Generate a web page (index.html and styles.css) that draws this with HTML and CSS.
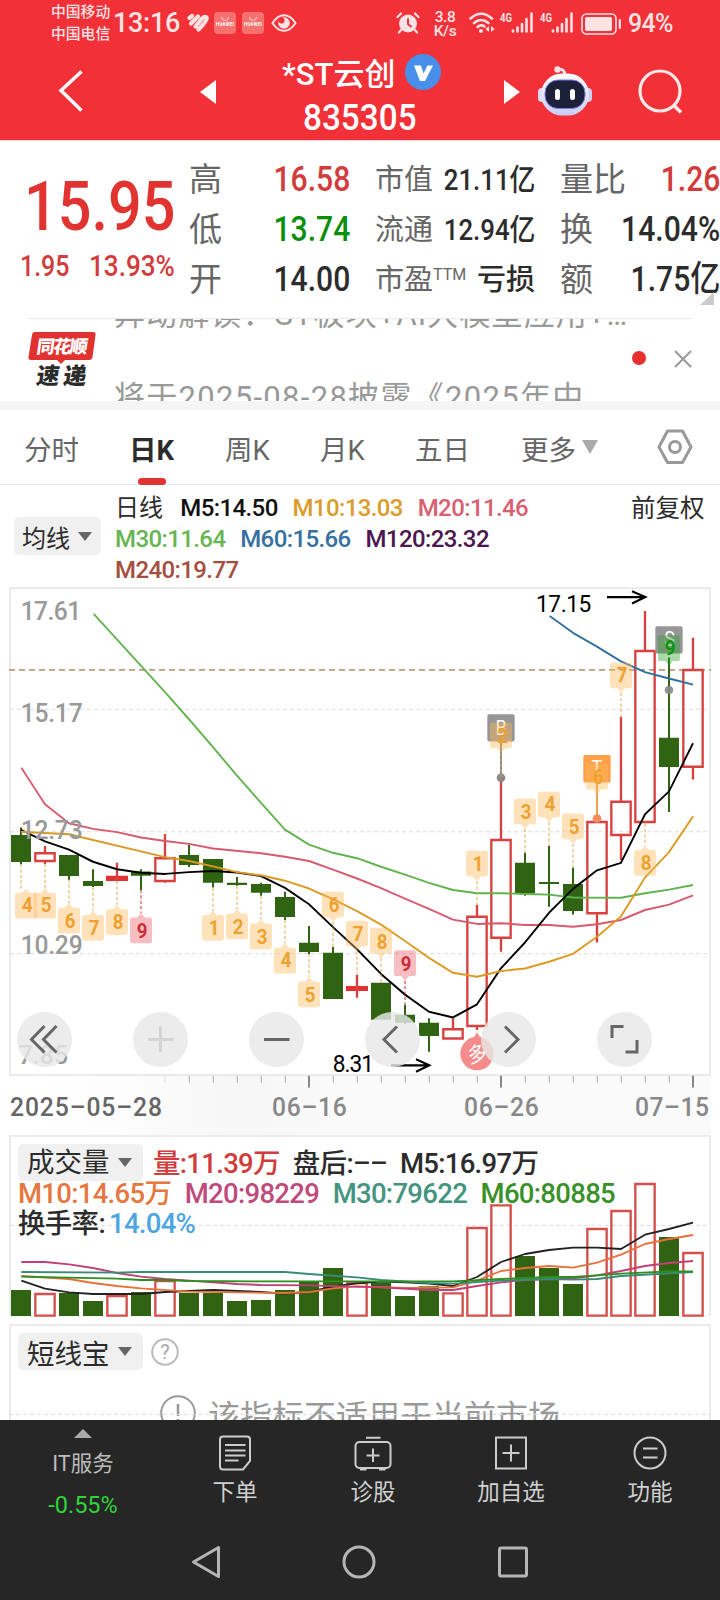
FILE: index.html
```html
<!DOCTYPE html>
<html lang="zh-CN">
<head>
<meta charset="utf-8">
<title>*ST云创 835305</title>
<link rel="stylesheet" href="styles.css">
</head>
<body>
<div class="app">
  <header class="top">
    <div class="status">
      <div class="carrier"><span>中国移动</span><span>中国电信</span></div>
      <span class="clock">13:16</span>
      <svg class="ic-health" width="22" height="20" viewBox="0 0 22 20"><g fill="none" stroke="#ffe2e3" stroke-width="4.200" stroke-linecap="round"><path d="M2.500 5L5 3"/><path d="M4 10.500L11 3.500"/><path d="M8.500 13.500L15.500 5Q18.500 2.500 19.800 5Q20 8 11.500 16.500"/></g></svg>
      <svg class="ic-hw" width="22" height="22" viewBox="0 0 22 22"><rect width="22" height="22" rx="4" fill="#f7716f"/><path d="M7.500 5a3.500 3.500 0 0 0 7 0" fill="none" stroke="#ffd5d5"/><text x="2" y="14" font-size="4.500" font-weight="700" fill="#fff" textLength="18">HUAWEI</text></svg>
      <svg class="ic-hw2" width="22" height="22" viewBox="0 0 22 22"><rect width="22" height="22" rx="4" fill="#f7716f"/><path d="M7.500 5a3.500 3.500 0 0 0 7 0" fill="none" stroke="#ffd5d5"/><text x="2" y="14" font-size="4.500" font-weight="700" fill="#fff" textLength="18">HUAWEI</text></svg>
      <svg class="ic-eye" width="26" height="18" viewBox="0 0 26 18"><path d="M1.500 9Q6.500 1.200 13 1.200T24.500 9Q19.500 16.800 13 16.800T1.500 9z" fill="none" stroke="#ffe2e3" stroke-width="2"/><circle cx="13" cy="9" r="5.800" fill="#ffe2e3"/><circle cx="10.500" cy="6.500" r="3" fill="#f23038"/></svg>
      <span class="spacer"></span>
      <svg class="ic-alarm" width="24" height="22" viewBox="0 0 24 22"><circle cx="12" cy="11.500" r="9" fill="#ffe2e3"/><path d="M1.500 5L5 1.500M22.500 5L19 1.500M5 18l-2 2.500M19 18l2 2.500" stroke="#ffe2e3" stroke-width="2.200" stroke-linecap="round"/><path d="M12 6.500v5.500l3.500 3" fill="none" stroke="#f23038" stroke-width="2"/></svg>
      <div class="speed"><span>3.8</span><span>K/s</span></div>
      <svg class="ic-wifi" width="26" height="22" viewBox="0 0 26 22"><g fill="none" stroke="#ffe2e3" stroke-width="2.600" stroke-linecap="round"><path d="M1.500 6.500Q12 -3 23 6.500"/><path d="M5 11Q12 5 19.500 11"/><path d="M8.500 15Q12 12 15.500 14.500"/></g><circle cx="12" cy="19" r="2" fill="#ffe2e3"/><path d="M20 14v6l-3.500-3zM22 14v6l3.500-3z" fill="#ffe2e3"/></svg>
      <svg class="ic-sig" width="34" height="22" viewBox="0 0 34 22"><text x="0" y="9.500" font-size="13" font-weight="700" fill="#ffe2e3" textLength="12" lengthAdjust="spacingAndGlyphs">4G</text><path d="M13 18.500v1M17.500 15.500v4M22 12v7.500M26.500 7v12.500M31.500 1.500v18" stroke="#ffe2e3" stroke-width="2.600" stroke-linecap="round"/></svg>
      <svg class="ic-sig2" width="34" height="22" viewBox="0 0 34 22"><text x="0" y="9.500" font-size="13" font-weight="700" fill="#ffe2e3" textLength="12" lengthAdjust="spacingAndGlyphs">4G</text><path d="M13 18.500v1M17.500 15.500v4M22 12v7.500M26.500 7v12.500M31.500 1.500v18" stroke="#ffe2e3" stroke-width="2.600" stroke-linecap="round"/></svg>
      <svg class="ic-bat" width="41" height="22" viewBox="0 0 41 22"><rect x="1" y="1" width="34" height="20" rx="4.500" fill="none" stroke="#ffe2e3" stroke-width="1.600"/><rect x="4" y="4" width="27" height="14" rx="2" fill="#ffe2e3"/><path d="M38.800 7v8" stroke="#ffe2e3" stroke-width="2.200" stroke-linecap="round"/></svg>
      <span class="pct">94%</span>
    </div>
    <div class="nav">
      <svg class="back" width="26" height="44" viewBox="0 0 26 44"><path d="M23.500 2.500L3 21.500L23.500 41.500" fill="none" stroke="#fff" stroke-width="3.500"/></svg>
      <svg class="prev" width="16" height="24" viewBox="0 0 16 24"><path d="M0 12L16 0V24z" fill="#fff"/></svg>
      <div class="title">
        <div class="name"><span>*ST云创</span><svg width="36" height="36" viewBox="0 0 36 36"><circle cx="18" cy="18" r="18" fill="#478fe8"/><path d="M9 11.500h7l2.500 8 4-8h5.500L20 27h-5z" fill="#fff"/></svg></div>
        <div class="code">835305</div>
      </div>
      <svg class="next" width="16" height="24" viewBox="0 0 16 24"><path d="M16 12L0 0V24z" fill="#fff"/></svg>
      <svg class="bot" width="54" height="50" viewBox="0 0 54 50"><defs><linearGradient id="shell" x1="0" y1="0" x2="0" y2="1"><stop offset="0" stop-color="#fff"/><stop offset="1" stop-color="#c9cdf4"/></linearGradient></defs><path d="M20 3.500Q27 2 27 10" fill="none" stroke="#e6dcf3" stroke-width="3"/><circle cx="19.500" cy="3.500" r="3.200" fill="#fbe0ea"/><rect x="0" y="22" width="10" height="14" rx="4" fill="#d9dcf8"/><rect x="44" y="22" width="10" height="14" rx="4" fill="#c9cdf4"/><rect x="3" y="7.500" width="48" height="42" rx="21" fill="url(#shell)"/><rect x="7" y="14" width="40" height="28.500" rx="13" fill="#1c2038" stroke="#7b78e6"/><rect x="17" y="23" width="5" height="11" rx="2.500" fill="#fff"/><rect x="32" y="23" width="5" height="11" rx="2.500" fill="#fff"/></svg>
      <svg class="search" width="46" height="46" viewBox="0 0 46 46"><circle cx="22" cy="22" r="20" fill="none" stroke="#ffe8e8" stroke-width="3.200"/><path d="M36 36.500L43 43.500" stroke="#ffe8e8" stroke-width="3.500"/></svg>
    </div>
  </header>

  <section class="quote">
    <div class="price">
      <div class="last"><span class="cond">15.95</span></div>
      <div class="chg"><span class="cond">1.95</span><span class="cond">13.93%</span></div>
    </div>
    <dl class="stats s1">
      <dt>高</dt><dd class="red">16.58</dd>
      <dt>低</dt><dd class="grn">13.74</dd>
      <dt>开</dt><dd>14.00</dd>
    </dl>
    <dl class="stats s2">
      <dt>市值</dt><dd>21.11<b>亿</b></dd>
      <dt>流通</dt><dd>12.94<b>亿</b></dd>
      <dt>市盈<sup>TTM</sup></dt><dd class="wide">亏损</dd>
    </dl>
    <dl class="stats s3">
      <dt>量比</dt><dd class="red">1.26</dd>
      <dt>换</dt><dd>14.04%</dd>
      <dt>额</dt><dd>1.75亿</dd>
    </dl>
    <i class="corner"></i>
  </section>

  <section class="news">
    <svg class="logo" width="70" height="58" viewBox="0 0 70 58"><path d="M7 1H65q3 0 2.500 3L64.500 26q-.5 3-3.500 3H37l-4 4-4-4H3q-3 0-2.500-3L4 4q.5-3 3-3z" fill="#e0322f"/><g transform="skewX(-8)" font-weight="900"><text x="11" y="22" font-size="18" fill="#fff" textLength="51">同花顺</text><text x="15" y="53" font-size="23" fill="#2b2b2b" textLength="50">速递</text></g></svg>
    <div class="lines"><p>异动解读：ST板块+AI大模型应用+…</p><p>将于2025-08-28披露《2025年中</p></div>
    <i class="dot"></i>
    <svg class="x" width="20" height="20" viewBox="0 0 20 20"><path d="M2 2L18 18M18 2L2 18" stroke="#999" stroke-width="2"/></svg>
  </section>

  <nav class="tabs">
    <span class="t1">分时</span><span class="t2 on">日K</span><span class="t3">周K</span><span class="t4">月K</span><span class="t5">五日</span><span class="t6">更多<i class="tri"></i></span>
    <svg class="gear" width="38" height="38" viewBox="0 0 38 38"><path d="M11.500 3H26.500L35 19L26.500 34.500H11.500L3 19z" fill="none" stroke="#999" stroke-width="3" stroke-linejoin="round"/><circle cx="19" cy="19" r="5.500" fill="none" stroke="#999" stroke-width="3"/></svg>
  </nav>

  <section class="legend">
    <button class="pick">均线<i class="tri"></i></button>
    <div class="mas">
      <div><span class="day">日线</span><span class="k">M5:14.50</span><span class="c10">M10:13.03</span><span class="c20">M20:11.46</span></div>
      <div><span class="c30">M30:11.64</span><span class="c60">M60:15.66</span><span class="c120">M120:23.32</span></div>
      <div><span class="c240">M240:19.77</span></div>
    </div>
    <span class="adj">前复权</span>
  </section>

  <section class="kline">
    <svg width="720" height="549" viewBox="0 17 2160 1537" preserveAspectRatio="none">
      <defs>
        <linearGradient id="axis" x1="0" x2="1"><stop offset="0" stop-color="#fff"/><stop offset=".12" stop-color="#fdfdfd"/><stop offset=".3" stop-color="#f7f7f7"/><stop offset=".5" stop-color="#fafafa"/></linearGradient>
        <path id="up" d="M0 0L12 12H25q8 0 8 8V76q0 8-8 8H-25q-8 0-8-8V20q0-8 8-8H-12z"/>
        <path id="dn" d="M0 0L12-13H25q8 0 8-8V-77q0-8-8-8H-25q-8 0-8 8V-21q0 8 8 8H-12z"/>
      </defs>
      <rect x="84" y="1388" width="2050" height="166" fill="url(#axis)"/>
      <rect x="30" y="23" width="2100" height="1363" fill="#fff" stroke="#ebebeb" stroke-width="6"/>
      <path d="M30 362H2130M30 705H2130M30 1046H2130" stroke="#ddd" stroke-width="3" stroke-dasharray="12 9"/>
      <path d="M27 252H2133" stroke="#b5a07a" stroke-width="5" stroke-dasharray="18 12"/>
      <g stroke="#306412" stroke-width="6" fill="none"><path d="M63 693V796M207 770V840M279 810V860M423 810V868M567 741V804M639 790V861M711 832V856M783 848V884M855 873V952M927 969V1047M999 1028V1100M1215 1190V1243M1287 1227V1321M1575 764V884M1647 745V915M1719 806V937M2007 217V650"/></g>
      <path fill="#306412" d="M33 714h60v76h-60zM177 770h60v59h-60zM249 843h60v14h-60zM393 816h60v12h-60zM537 770h60v28h-60zM609 781h60v67h-60zM681 848h60v6h-60zM753 851h60v25h-60zM825 888h60v56h-60zM897 1016h60v26h-60zM969 1044h60v129h-60zM1113 1128h60v103h-60zM1185 1217h60v23h-60zM1257 1240h60v37h-60zM1545 792h60v86h-60zM1617 846h60v5h-60zM1689 851h60v76h-60zM1977 442h60v82h-60z"/>
      <path fill="#e03331" d="M318 828h66v15h-66zM1038 1137h66v14h-66z"/>
      <g stroke="#d8413f" stroke-width="7" fill="none">
        <path d="M135 745V765M135 787V795M351 792V843M495 711V779M495 843V848M1071 1106V1170M1359 1227V1258M1431 910V943M1431 1249V1260M1503 552V728M1503 1002V1041M1791 665V678M1791 933V1015M1863 384V621M1863 714V784M1935 87V199M2079 162V252M2079 523V559"/>
        <path d="M106 765h58v22h-58zM466 779h58v64h-58zM1330 1258h58v26h-58zM1402 943h58v306h-58zM1474 728h58v274h-58zM1762 678h58v255h-58zM1834 621h58v93h-58zM1906 199h58v479h-58zM2050 252h58v271h-58z"/>
      </g>
      <g fill="none" stroke-width="5.500" stroke-linejoin="round">
        <polyline stroke="#60b34c" points="281,95 495,314 567,390 639,468 711,548 783,624 855,699 927,741 999,764 1071,779 1143,803 1215,825 1287,848 1359,868 1431,877 1503,877 1575,879 1647,881 1719,889 1863,890 1935,877 2007,867 2079,854"/>
        <polyline stroke="#d9596c" points="64,526 135,628 207,681 279,697 351,706 423,721 495,731 567,739 639,752 783,765 855,775 927,787 999,811 1071,836 1143,863 1215,892 1287,921 1359,951 1431,963 1503,961 1575,966 1647,966 1719,971 1791,964 1863,952 1935,924 2007,909 2079,883"/>
        <polyline stroke="#000" points="63,700 135,732 207,755 279,789 351,810 423,820 495,823 567,818 639,815 711,819 783,829 855,862 927,908 999,972 1071,1034 1143,1103 1215,1161 1287,1209 1359,1225 1431,1188 1503,1087 1575,1015 1647,932 1719,865 1791,813 1863,792 1935,656 2007,592 2079,457"/>
        <polyline stroke="#dc9a24" points="63,705 207,712 495,776 567,787 639,802 711,818 783,827 855,842 927,864 999,894 1071,927 1143,965 1215,1011 1287,1058 1359,1100 1431,1111 1503,1095 1575,1088 1647,1069 1719,1047 1791,999 1863,942 1935,833 2007,762 2079,662"/>
        <polyline stroke="#2f6f9f" points="1649,101 1719,148 1791,187 1863,228 1935,258 2007,276 2079,293"/>
      </g>
      <g class="axis">
        <text x="62" y="111" textLength="182">17.61</text><text x="62" y="399" textLength="186">15.17</text><text x="62" y="724" textLength="186">12.73</text><text x="62" y="1046" textLength="186">10.29</text><text x="56" y="1354" textLength="148">7.85</text>
      </g>
      <g class="marks">
        <path d="M1503 452V554" stroke="#888" stroke-width="6"/><ellipse cx="1503" cy="554" rx="13" ry="12" fill="#888"/><rect x="1462" y="376" width="82" height="76" rx="5" fill="#969696"/><text x="1503" y="434" font-size="54" fill="#fff" text-anchor="middle">B</text>
        <path d="M1791 567V668" stroke="#f58a2e" stroke-width="5"/><ellipse cx="1791" cy="668" rx="13" ry="12" fill="#f58a5c"/><rect x="1750" y="490" width="82" height="77" rx="5" fill="#ff9f4a"/><text x="1791" y="546" font-size="54" fill="#fff" text-anchor="middle">T</text>
        <ellipse cx="2007" cy="308" rx="13" ry="12" fill="#888" fill-opacity=".9"/><rect x="1966" y="130" width="82" height="76" rx="5" fill="#969696"/><text x="2009" y="186" font-size="54" fill="#fff" text-anchor="middle">S</text>
      </g>
      <g stroke="#e0a94f" stroke-width="3" stroke-dasharray="9 6"><path d="M63 796V864M135 795V864M207 838V906M279 860V926M351 843V910M639 861V926M711 856V922M783 884V950M855 952V1018M927 1047V1112M1935 682V744M999 958V1028M1071 1039V1106M1143 1059V1128M1431 843V910M1503 484V552M1575 697V764M1647 678V745M1719 739V806M1791 600V665M1863 316V384"/><path d="M423 868V933M1215 1122V1190" stroke="#c7303a"/></g>
      <g fill="#ffba5a" fill-opacity=".42"><use href="#up" x="78" y="864"/><use href="#up" x="135" y="864"/><use href="#up" x="207" y="906"/><use href="#up" x="279" y="926"/><use href="#up" x="351" y="910"/><use href="#up" x="639" y="926"/><use href="#up" x="711" y="922"/><use href="#up" x="783" y="950"/><use href="#up" x="855" y="1018"/><use href="#up" x="927" y="1112"/><use href="#up" x="1935" y="744"/><use href="#dn" x="999" y="958"/><use href="#dn" x="1071" y="1039"/><use href="#dn" x="1143" y="1059"/><use href="#dn" x="1431" y="843"/><use href="#dn" x="1503" y="484"/><use href="#dn" x="1575" y="697"/><use href="#dn" x="1647" y="678"/><use href="#dn" x="1719" y="739"/><use href="#dn" x="1791" y="600"/><use href="#dn" x="1863" y="316"/></g>
      <g fill="#e8404a" fill-opacity=".34"><use href="#up" x="423" y="933"/><use href="#dn" x="1215" y="1122"/></g>
      <use href="#dn" x="2007" y="240" fill="#2aa02a" fill-opacity=".4"/>
      <g class="tagn"><text x="82" y="930">4</text><text x="138" y="930">5</text><text x="210" y="974">6</text><text x="282" y="994">7</text><text x="354" y="977">8</text><text x="642" y="995">1</text><text x="714" y="990">2</text><text x="786" y="1018">3</text><text x="858" y="1085">4</text><text x="930" y="1181">5</text><text x="1002" y="931">6</text><text x="1074" y="1012">7</text><text x="1146" y="1032">8</text><text x="1434" y="815">1</text><text x="1508" y="456">2</text><text x="1578" y="668">3</text><text x="1650" y="648">4</text><text x="1722" y="711">5</text><text x="1794" y="572">6</text><text x="1866" y="287">7</text><text x="1938" y="811">8</text><g fill="#cb2e36"><text x="426" y="1002">9</text><text x="1218" y="1094">9</text></g><text x="2010" y="209" fill="#0b9410">9</text></g>
      <g class="peak"><text x="1608" y="89" textLength="166">17.15</text><text x="998" y="1377" textLength="124">8.31</text></g>
      <path d="M1821 48H1936M1896 32L1936 48L1896 66M1173 1359H1288M1248 1342L1288 1359L1248 1377" fill="none" stroke="#000" stroke-width="6"/>
      <path d="M1431 1266L1444 1286H1418z" fill="#f58b8b"/><ellipse cx="1431" cy="1326" rx="50" ry="47" fill="#f58b8b"/><text x="1431" y="1348" class="duo" transform="rotate(-14 1431 1326)">多</text>
      <path d="M495 1388v20" stroke="#ddd" stroke-width="3"/>
      <path d="M568 1388v20M640 1388v20M712 1388v20M784 1388v20M856 1388v20M1000 1388v20M1072 1388v20M1144 1388v20M1216 1388v20M1288 1388v20M1360 1388v20M1432 1388v20M1576 1388v20M1648 1388v20M1720 1388v20M1792 1388v20M1864 1388v20M1936 1388v20M2008 1388v20" stroke="#aaa" stroke-width="3"/>
      <path d="M927 1388v33M1503 1388v33M2079 1388v33" stroke="#888" stroke-width="6"/>
      <g class="dates"><text x="30" y="1502" textLength="456" fill="#666">2025–05–28</text><text x="816" y="1502" textLength="224">06–16</text><text x="1392" y="1502" textLength="224">06–26</text><text x="1905" y="1502" textLength="222">07–15</text></g>
    </svg>
    <div class="tools">
      <button><svg width="55" height="55" viewBox="0 0 55 55"><path d="M27.500 14L14.500 27.500L27.500 40.500M39.500 14L26.500 27.500L39.500 40.500"/></svg></button>
      <button><svg class="dim" width="55" height="55" viewBox="0 0 55 55"><path d="M15 27.500H40.500M27.500 14.500V40"/></svg></button>
      <button><svg width="55" height="55" viewBox="0 0 55 55"><path d="M15 27.500H40.500"/></svg></button>
      <button><svg width="55" height="55" viewBox="0 0 55 55"><path d="M32 14.500L19 27.500L32 40.500"/></svg></button>
      <button><svg width="55" height="55" viewBox="0 0 55 55"><path d="M24 14.500L37 27.500L24 40.500"/></svg></button>
      <button><svg width="55" height="55" viewBox="0 0 55 55"><path d="M15 26V14.500H26.500M40 28V40H28.500"/></svg></button>
    </div>
  </section>

  <section class="volume">
    <svg class="plot" width="720" height="185" viewBox="0 45 2160 555">
      <path d="M30 588V48H2130V588" fill="none" stroke="#ebebeb" stroke-width="6"/><path d="M30 588H2130" stroke="#eee" stroke-width="3"/>
      <path d="M30 316H2130" stroke="#ddd" stroke-width="3" stroke-dasharray="12 9"/>
      <path fill="#306412" d="M33 510h60v78h-60zM177 519h60v69h-60zM249 543h60v45h-60zM393 516h60v72h-60zM537 519h60v69h-60zM609 519h60v69h-60zM681 543h60v45h-60zM753 540h60v48h-60zM825 510h60v78h-60zM897 486h60v102h-60zM969 444h60v144h-60zM1113 489h60v99h-60zM1185 528h60v60h-60zM1257 499h60v89h-60zM1545 408h60v180h-60zM1617 444h60v144h-60zM1689 492h60v96h-60zM1977 351h60v237h-60z"/>
      <path fill="none" stroke="#d64f4d" stroke-width="7" d="M106 522h58v65h-58zM322 528h58v59h-58zM466 483h58v104h-58zM1042 489h58v98h-58zM1330 520h58v67h-58zM1402 324h58v263h-58zM1474 256h58v331h-58zM1762 327h58v260h-58zM1834 273h58v314h-58zM1906 192h58v395h-58zM2050 399h58v188h-58z"/>
      <g fill="none" stroke-width="5.500" stroke-linejoin="round">
        <polyline stroke="#222" points="64,482 135,506 207,517 279,522 423,522 495,516 639,510 783,516 855,521 927,516 999,499 1071,490 1143,485 1215,487 1287,491 1359,498 1431,471 1503,426 1575,402 1647,390 1719,383 1791,383 1863,387 1935,344 2007,327 2079,308"/>
        <polyline stroke="#e8703a" points="64,468 207,477 279,489 351,498 423,505 567,515 855,519 927,516 999,505 1071,499 1215,504 1359,502 1431,482 1503,453 1575,444 1647,438 1719,443 1791,428 1863,404 1935,372 2007,357 2079,345"/>
        <polyline stroke="#bf4175" points="64,426 135,426 207,433 279,444 351,459 423,470 495,477 567,482 711,492 783,495 927,496 1143,502 1287,510 1359,510 1431,498 1503,487 1575,480 1719,475 1791,466 1863,453 1935,438 2007,429 2079,423"/>
        <polyline stroke="#388c76" points="64,456 351,458 423,456 855,456 927,462 1071,472 1143,480 1287,489 1359,491 1503,482 1647,477 1719,479 1791,477 1863,468 2079,456"/>
        <polyline stroke="#2c8f1f" points="64,470 351,476 423,480 495,480 567,483 783,484 1359,484 1503,477 1647,471 1719,471 1791,466 1863,461 2007,454 2079,454"/>
      </g>
    </svg>
    <div class="vlegend">
      <div class="r1"><button class="pick big">成交量<i class="tri"></i></button><span class="red">量:11.39万</span><span class="aft">盘后:––</span><span>M5:16.97万</span></div>
      <div class="r2"><span class="v10">M10:14.65万</span><span class="v20">M20:98229</span><span class="v30">M30:79622</span><span class="v60">M60:80885</span></div>
      <div class="r3"><span>换手率:</span><span class="turn">14.04%</span></div>
    </div>
  </section>

  <section class="short">
    <div class="sh"><button class="pick big">短线宝<i class="tri"></i></button><svg width="28" height="28" viewBox="0 0 28 28"><circle cx="14" cy="14" r="12.800" fill="none" stroke="#bbb" stroke-width="2"/><text x="14" y="21" font-size="20" fill="#aaa" text-anchor="middle">?</text></svg></div>
    <div class="na"><svg width="36" height="36" viewBox="0 0 36 36"><circle cx="18" cy="18" r="16.800" fill="none" stroke="#999" stroke-width="2"/><path d="M18 9v12M18 24v3" stroke="#999" stroke-width="2.500"/></svg><span>该指标不适用于当前市场</span></div>
  </section>

  <footer class="bottom">
    <div class="acts">
      <div class="idx"><i></i><span>IT服务</span><b>-0.55%</b></div>
      <div class="act"><svg width="34" height="36" viewBox="0 0 34 36"><path d="M5 1.500H29q3 0 3 3V26l-7 8.500H5q-3 0-3-3V4.500q0-3 3-3z"/><path d="M7 10H27.500M7 15.500H27.500M7 20.500H27.500M7 25.500H20.500"/></svg><span>下单</span></div>
      <div class="act"><svg width="38" height="36" viewBox="0 0 38 36"><rect x="1.500" y="7" width="35" height="26" rx="4"/><path d="M12 2.800H26.500M6 34.500H12.500M25 34.500H31.500M19 13.500V27M12.500 20.500H25.500"/></svg><span>诊股</span></div>
      <div class="act"><svg width="34" height="36" viewBox="0 0 34 36"><rect x="2" y="2.500" width="30" height="31"/><path d="M17 9.500V26.500M8.500 18H25.500"/></svg><span>加自选</span></div>
      <div class="act a4"><svg width="34" height="36" viewBox="0 0 34 36"><circle cx="17" cy="18" r="15.500"/><path d="M10 13.500H24.500M10 22.500H24.500"/></svg><span>功能</span></div>
    </div>
    <div class="sys">
      <svg width="30" height="34" viewBox="0 0 30 34"><path d="M27.500 2.500V31.500L2.500 17z"/></svg>
      <svg width="34" height="34" viewBox="0 0 34 34"><circle cx="17" cy="17" r="15"/></svg>
      <svg width="32" height="34" viewBox="0 0 32 34"><rect x="2.500" y="3" width="27" height="28" rx="1.500"/></svg>
    </div>
  </footer>
</div>
</body>
</html>
```
FILE: styles.css
```css
* { box-sizing: border-box; }
body, p, dl, dd { margin: 0; }
body { width: 720px; height: 1600px; overflow: hidden; background: #fff; color: #2c2c2c; font-family: Roboto, "Noto Sans CJK SC", sans-serif; }
svg { display: block; flex: none; }
svg text { font-family: Roboto, "Noto Sans CJK SC", sans-serif; }
button { border: 0; padding: 0; font: inherit; color: inherit; }
.app { display: flex; flex-direction: column; width: 720px; height: 1600px; }
.red { color: #d23c3c; }
.grn { color: #0b8f0b; }
.cond { display: inline-block; transform: scaleX(.86); transform-origin: left; }

.top { height: 141px; flex: none; background: #f23038; color: #fff; border-bottom: 1px solid #fbd9dc; }
.status { display: flex; align-items: center; height: 46px; padding: 0 42px 0 51px; color: #ffe2e3; }
.status .spacer { flex: 1; }
.carrier { display: flex; flex-direction: column; width: 62px; font-size: 14.800px; font-weight: 500; line-height: 22px; white-space: nowrap; }
.clock { width: 74px; font-size: 27px; font-weight: 500; line-height: 46px; letter-spacing: -.3px; }
.ic-hw { margin-left: 5px; }
.ic-hw2 { margin-left: 6px; }
.ic-eye { margin-left: 7px; }
.speed { display: flex; flex-direction: column; align-items: center; width: 26px; margin-left: 12px; font-size: 15.500px; font-weight: 500; line-height: 14.500px; padding-top: 2px; letter-spacing: -.5px; }
.ic-wifi { margin-left: 11px; }
.ic-sig { margin-left: 5px; }
.ic-sig2 { margin-left: 6px; }
.ic-bat { margin-left: 7px; margin-top: 1px; }
.pct { width: 50px; margin-left: 6px; font-size: 25px; font-weight: 500; letter-spacing: -.7px; line-height: 46px; padding-top: 2px; }
.nav { display: flex; align-items: flex-start; height: 94px; }
.back { margin: 23px 0 0 58px; }
.prev { margin: 34px 0 0 116px; }
.title { width: 170px; margin: 8px 0 0 66px; }
.name { display: flex; align-items: center; height: 38px; font-size: 31px; font-weight: 500; white-space: nowrap; }
.name span { width: 117px; line-height: 38px; padding-top: 3px; }
.name svg { margin: -2px 0 0 6px; }
.code { width: 170px; margin: 5px 0 0 21px; font-size: 36px; font-weight: 500; line-height: 42px; transform: scaleX(.925); transform-origin: left; }
.next { margin: 34px 0 0 52px; }
.bot { margin: 20px 0 0 18px; }
.search { margin: 23px 0 0 46px; }

.quote { position: relative; display: flex; height: 177px; flex: none; padding-top: 14px; }
.price { width: 190px; color: #e13431; font-weight: 500; }
.last { height: 76px; padding: 14px 0 0 24px; font-size: 69px; line-height: 76px; }
.last .cond { transform: scaleX(.86); }
.chg { display: flex; gap: 6px; padding: 13px 0 0 20px; font-size: 29px; line-height: 44px; color: #d23c3c; white-space: nowrap; }
.chg .cond:first-child { width: 63px; }
.chg .cond:last-child { transform: scaleX(.9); }
.stats { display: grid; grid-template-columns: auto minmax(0, 1fr); grid-auto-rows: 50px; align-items: center; line-height: 50px; white-space: nowrap; }
.stats dt { color: #666; }
.stats dd { justify-self: end; font-weight: 500; transform: scaleX(.86); transform-origin: right; }
.stats dd b { margin-right: -1px; font-weight: 500; }
.stats dd.wide { transform: none; }
.s1 { width: 160px; font-size: 35px; }
.s1 dt, .s3 dt { font-size: 33px; }
.s1 dt { margin-left: -1px; }
.s2 { width: 160px; margin-left: 25px; font-size: 30px; }
.s2 dt, .s2 .wide { font-size: 29px; }
.s2 sup { font-size: 16px; line-height: 0; vertical-align: 10px; }
.s3 { width: 160px; margin-left: 25px; font-size: 35px; }
.corner { position: absolute; left: 700px; top: 151px; border-left: 14px solid transparent; border-bottom: 13px solid #ccc; }

.news { position: relative; display: flex; height: 92px; flex: none; border-bottom: 9px solid #f5f5f5; overflow: hidden; }
.news::before { content: ""; position: absolute; left: 28px; right: 28px; top: 0; height: 1px; background: #e8e8e8; }
.logo { margin: 13px 0 0 28px; }
.lines { width: 514px; margin: -45px 0 0 16px; font-size: 31px; line-height: 83px; color: #999; white-space: nowrap; letter-spacing: 1.100px; }
.lines p + p { letter-spacing: 1.300px; }
.dot { width: 14px; height: 14px; margin: 33px 0 0 4px; border-radius: 50%; background: #e8302f; }
.x { margin: 31px 0 0 27px; }

.tabs { display: flex; align-items: center; height: 75px; flex: none; border-bottom: 1px solid #e6e6e6; font-size: 27.500px; color: #666; padding: 1px 0 0 24px; white-space: nowrap; }
.t1 { width: 105px; }
.t2 { width: 96px; }
.t3 { width: 95px; }
.t4 { width: 95px; }
.t5 { width: 106px; }
.t6 { display: flex; align-items: center; width: 135px; }
.tabs .on { position: relative; color: #2c2c2c; font-weight: 700; }
.on::after { content: ""; position: absolute; left: 9px; bottom: -17px; width: 28px; height: 7px; border-radius: 4px; background: #e13431; }
.tri { display: inline-block; border: 7px solid transparent; border-bottom: 0; border-top: 9px solid #666; }
.t6 .tri { margin: -2px 0 0 6px; border-width: 14px 8.500px 0; border-top-color: #aaa; }
.gear { margin: -2px 0 0; }

.legend { display: flex; height: 101px; flex: none; }
.pick { display: flex; align-items: center; justify-content: space-between; width: 87px; height: 38px; margin: 32px 0 0 14px; padding: 0 9px 0 8px; border-radius: 5px; background: #f0f0f0; font-size: 24px; }
.mas { width: 430px; padding: 8px 0 0 14px; font-size: 24px; font-weight: 500; line-height: 31px; letter-spacing: -.6px; white-space: nowrap; }
.mas div { display: flex; gap: 14.800px; height: 31px; }
.day { font-weight: 400; letter-spacing: 0; width: 50.500px; }
.k { color: #111; }
.c10 { color: #dc9c29; }
.c20 { color: #d9606f; }
.c30 { color: #66b552; }
.c60 { color: #36719f; }
.c120 { color: #4c1650; }
.c240 { color: #a54e40; }
.adj { margin: 8px 0 0 100px; font-size: 24.500px; line-height: 32px; white-space: nowrap; }

.kline { position: relative; height: 549px; flex: none; }
.axis { font-size: 74px; font-weight: 500; fill: #999; }
.tagn { font-size: 56px; font-weight: 700; fill: #eea12f; text-anchor: middle; }
.peak { font-size: 68px; fill: #000; }
.duo { font-size: 58px; fill: #fff; text-anchor: middle; }
.dates { font-size: 74px; font-weight: 500; fill: #888; }
.tools { position: absolute; left: 17px; top: 426px; display: grid; grid-template-columns: repeat(5, 116px) 55px; }
.tools button { display: block; width: 55px; height: 55px; border-radius: 50%; background: rgba(232, 232, 232, .82); }
.tools path { fill: none; stroke: #666; stroke-width: 3; }
.tools .dim path { stroke: #d4d4d4; }

.volume { position: relative; height: 185px; flex: none; }
.vlegend { position: absolute; left: 18px; top: 9px; font-size: 27.500px; font-weight: 500; letter-spacing: -.7px; white-space: nowrap; }
.vlegend > div { display: flex; }
.r1 { height: 37px; line-height: 40px; gap: 13px; }
.pick.big { width: 125px; height: 37px; margin: 0; padding: 0 11px 0 9px; font-size: 27.500px; font-weight: 400; letter-spacing: 0; }
.r1 .red { margin-left: -3px; }
.r2 { height: 28px; line-height: 26px; gap: 13.500px; }
.r3 { height: 31px; line-height: 30px; gap: 4px; }
.v10 { color: #e5773f; }
.v20 { color: #c04a7b; }
.v30 { color: #449480; }
.v60 { color: #3a912a; }
.turn { color: #4da6e2; }

.short { position: relative; height: 100px; flex: none; margin: 0 9px; overflow: hidden; }
.short::before { content: ""; position: absolute; inset: 4px 0 0; border: 2px solid #ebebeb; border-bottom: 0; }
.short::after { content: ""; position: absolute; left: 0; right: 0; top: 94px; height: 1px; background: repeating-linear-gradient(90deg, #ddd 0 4px, transparent 4px 7px); }
.sh { position: relative; display: flex; align-items: center; gap: 8px; padding: 13px 0 0 9px; }
.na { position: relative; display: flex; gap: 12px; margin: 25px 0 0 151px; font-size: 32px; line-height: 44px; color: #999; white-space: nowrap; }

.bottom { height: 180px; flex: none; background: #262626; color: #d0d0d0; }
.acts { display: flex; height: 105px; font-size: 22px; white-space: nowrap; }
.idx { display: flex; flex-direction: column; align-items: center; width: 166px; }
.idx i { margin-top: 9px; border: 9px solid transparent; border-top: 0; border-bottom-color: #aaa; }
.idx span { margin-top: 9px; line-height: 34px; color: #bbb; font-size: 21.500px; }
.idx b { margin-top: 7px; line-height: 34px; font-size: 23.500px; font-weight: 400; color: #2fd43a; }
.act { display: flex; flex-direction: column; align-items: center; width: 138px; padding-top: 15px; }
.a4 { width: 140px; }
.act span { line-height: 34px; margin-top: 4px; font-size: 22.500px; }
.act svg { fill: none; stroke: #ccc; stroke-width: 2; }
.sys { display: flex; align-items: center; gap: 121px; height: 73px; padding-left: 191px; }
.sys svg { fill: none; stroke: #b5b5b5; stroke-width: 3; stroke-linejoin: round; }
```
